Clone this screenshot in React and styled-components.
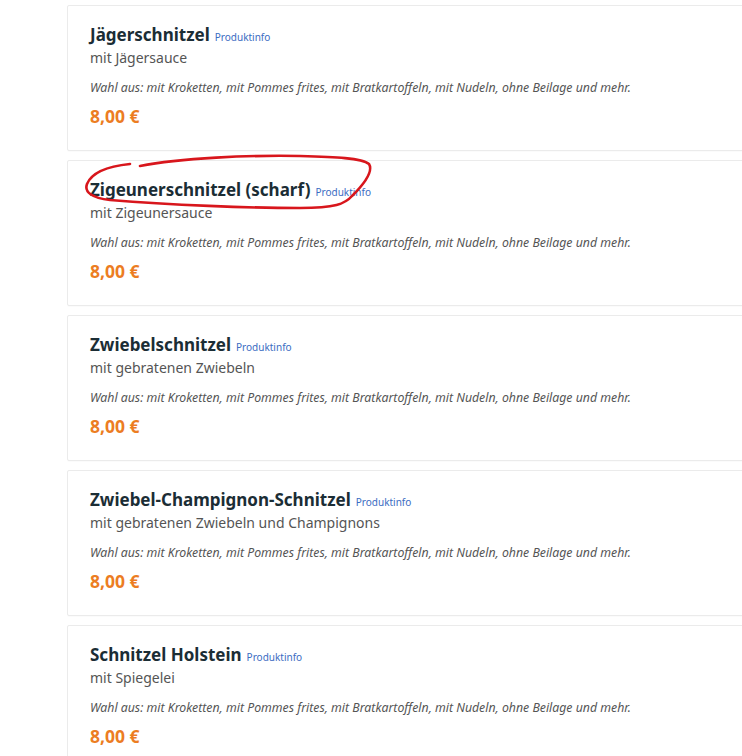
import React from 'react';
import styled, { createGlobalStyle } from 'styled-components';

const Global = createGlobalStyle`
  html, body {
    margin: 0;
    padding: 0;
    background: #fff;
    overflow: hidden;
  }
  body {
    font-family: "Noto Sans", "Liberation Sans", sans-serif;
  }
`;

const Page = styled.div`
  position: relative;
  height: 756px;
  padding: 5px 0 0 67px;
  box-sizing: border-box;
`;

const List = styled.div`
  display: flex;
  flex-direction: column;
  gap: 9px;
  width: 720px;
`;

const Card = styled.div`
  background: #fff;
  border: 1px solid #ebebeb;
  border-radius: 2px;
  padding: 18px 22px 22px;
  box-shadow: 0 1px 1px rgba(0, 0, 0, 0.02);
`;

const TitleRow = styled.div`
  display: flex;
  align-items: baseline;
  gap: 5px;
  height: 22px;
  line-height: 22px;
`;

const Title = styled.h3`
  margin: 0;
  font-size: 17px;
  font-weight: 700;
  color: #1b2d35;
`;

const InfoLink = styled.a`
  font-size: 10px;
  color: #3b6cc2;
  text-decoration: none;
`;

const Sub = styled.div`
  margin-top: 2px;
  font-size: 14px;
  line-height: 20px;
  color: #555;
`;

const Choice = styled.div`
  margin-top: 11px;
  font-size: 12.3px;
  line-height: 18px;
  font-style: italic;
  color: #555;
  white-space: nowrap;
`;

const Price = styled.div`
  margin-top: 7px;
  font-size: 17.5px;
  line-height: 24px;
  font-weight: 700;
  color: #ec7d22;
`;

const Scribble = styled.svg`
  position: absolute;
  left: 0;
  top: 0;
  pointer-events: none;
`;

const items = [
  { name: 'Jägerschnitzel', sub: 'mit Jägersauce' },
  { name: 'Zigeunerschnitzel (scharf)', sub: 'mit Zigeunersauce' },
  { name: 'Zwiebelschnitzel', sub: 'mit gebratenen Zwiebeln' },
  { name: 'Zwiebel-Champignon-Schnitzel', sub: 'mit gebratenen Zwiebeln und Champignons' },
  { name: 'Schnitzel Holstein', sub: 'mit Spiegelei' },
];

const choices =
  'Wahl aus: mit Kroketten, mit Pommes frites, mit Bratkartoffeln, mit Nudeln, ohne Beilage und mehr.';

export default function App() {
  return (
    <Page>
      <Global />
      <List>
        {items.map((it) => (
          <Card key={it.name}>
            <TitleRow>
              <Title>{it.name}</Title>
              <InfoLink href="#">Produktinfo</InfoLink>
            </TitleRow>
            <Sub>{it.sub}</Sub>
            <Choice>{choices}</Choice>
            <Price>8,00 €</Price>
          </Card>
        ))}
      </List>
      <Scribble width="742" height="756" viewBox="0 0 742 756">
        <path
          d="M 140 166 C 180 158, 250 155, 300 156 C 335 157, 362 158, 369 164 C 374 172, 362 186, 352 196 C 345 204, 335 208, 300 208 C 250 208, 170 205, 110 200 C 92 198, 84 192, 87 184 C 92 172, 110 166, 130 164"
          fill="none"
          stroke="#d8161c"
          strokeWidth="2.6"
          strokeLinecap="round"
        />
      </Scribble>
    </Page>
  );
}
